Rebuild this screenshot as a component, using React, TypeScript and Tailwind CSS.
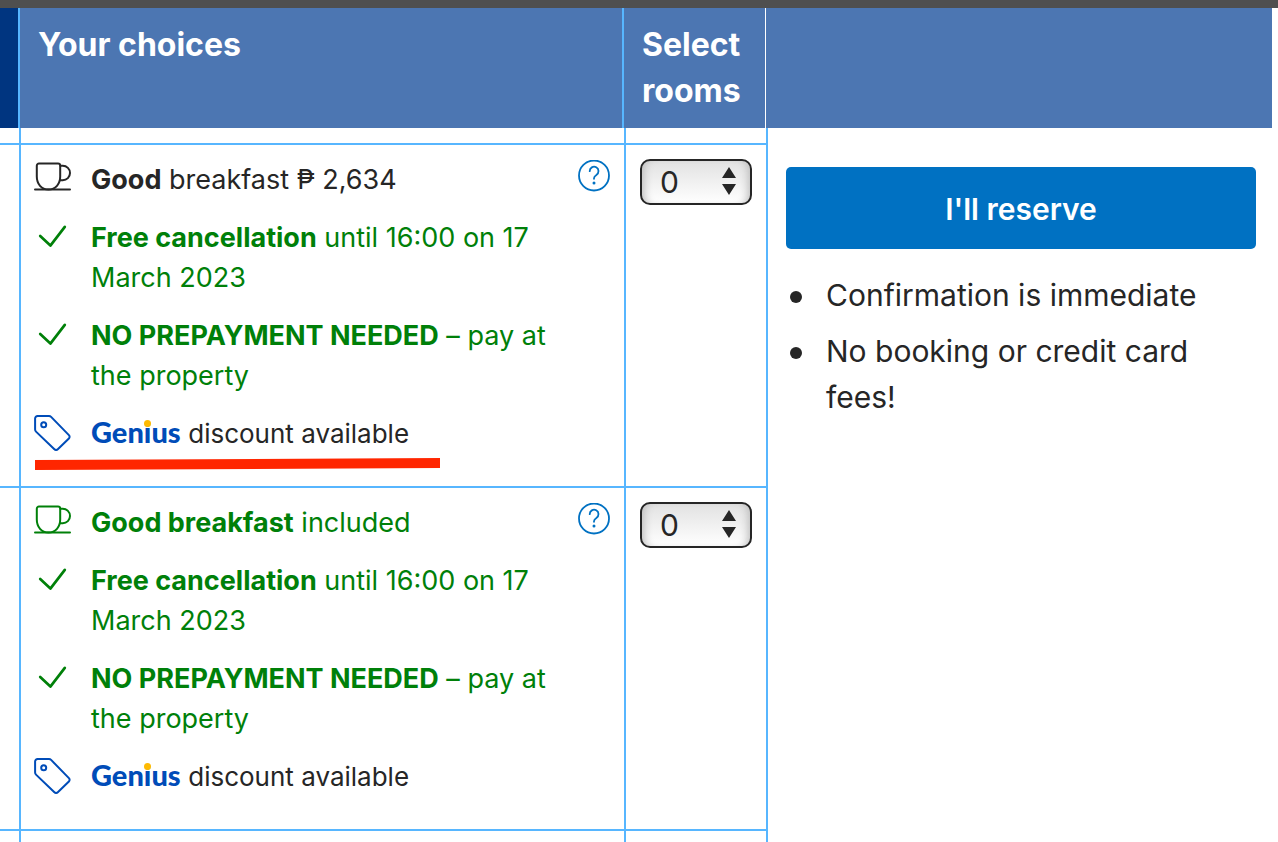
import type { ReactNode } from 'react';

interface RateOption {
  id: string;
  meal: ReactNode;
  mealIncluded: boolean;
  highlighted: boolean;
}

const rates: RateOption[] = [
  {
    id: 'room-only',
    meal: (
      <>
        <b>Good</b> breakfast ₱ 2,634
      </>
    ),
    mealIncluded: false,
    highlighted: true,
  },
  {
    id: 'breakfast',
    meal: (
      <>
        <b>Good breakfast</b> included
      </>
    ),
    mealIncluded: true,
    highlighted: false,
  },
];

const CupIcon = () => (
  <svg className="h-8 w-[37px]" viewBox="0 0 37 32" fill="none" stroke="currentColor" strokeWidth="2" strokeLinecap="round" strokeLinejoin="round" aria-hidden="true">
    <path d="M5 3.5h19a2.2 2.2 0 0 1 2.2 2.2v10.8c0 7.5-4.7 13-11.7 13S2.800 24 2.800 16.500V5.700A2.200 2.200 0 0 1 5 3.500z" />
    <path d="M26.500 5.800h2.300a7.200 7.200 0 0 1 0 14.400h-2.900" />
    <path d="M1 29.500h35" />
  </svg>
);

const CheckIcon = () => (
  <svg className="h-8 w-[37px]" viewBox="0 0 37 32" fill="none" stroke="currentColor" strokeWidth="2.700" strokeLinecap="round" strokeLinejoin="round" aria-hidden="true">
    <path d="M6.200 18l10.200 9.600L30.800 8.900" />
  </svg>
);

const TagIcon = () => (
  <svg className="h-[37px] w-[37px]" viewBox="0 -1 37 37" fill="none" stroke="currentColor" strokeWidth="2" strokeLinejoin="round" aria-hidden="true">
    <path d="M3.600 1H15a3 3 0 0 1 2.100.9l17.800 18.200a2.400 2.400 0 0 1 0 3.400L23.800 34.300a2.400 2.400 0 0 1-3.400 0L2 16.600a3 3 0 0 1-.9-2.100V3.500A2.500 2.500 0 0 1 3.600 1z" />
    <circle cx="9.700" cy="9.700" r="2.500" />
  </svg>
);

const GeniusLogo = () => (
  <span className="font-[Lato,sans-serif] text-[29px] leading-9 font-black text-[#004cb8]">
    Gen
    <span className="relative">
      i
      <span className="absolute top-[6px] left-0 size-[7px] rounded-full bg-[#feba02]" />
    </span>
    us
  </span>
);

const Perk = ({ icon, children }: { icon: ReactNode; children: ReactNode }) => (
  <li className="relative flex gap-5">
    <span className="shrink-0">{icon}</span>
    <span>{children}</span>
  </li>
);

const RoomSelect = ({ id }: { id: string }) => (
  <div className="relative">
    <select
      id={id}
      defaultValue="0"
      aria-label="Select rooms"
      className="block h-[46px] w-full appearance-none rounded-[10px] border-2 border-[#262626] bg-linear-to-b from-[#e2e2e2] to-white pl-[18px] text-[30px] leading-none text-[#262626] shadow-[inset_8px_0_8px_-6px_#bbb,inset_-8px_0_8px_-6px_#bbb]"
    >
      <option>0</option>
      <option>1</option>
      <option>2</option>
      <option>3</option>
    </select>
    <svg className="pointer-events-none absolute top-2 right-4 h-7 w-[14px]" viewBox="0 0 14 28" fill="#262626" aria-hidden="true">
      <path d="M7 0l7 11H0zM0 17h14L7 28z" />
    </svg>
  </div>
);

const RateRow = ({ rate }: { rate: RateOption }) => (
  <tr className="align-top">
    <td className="border-r-2 border-b-2 border-[#57b6ff]" />
    <td className="border-r-2 border-b-2 border-[#57b6ff] pt-[15px] pr-[14px] pb-8 pl-[13px]">
      <div className="flex items-start justify-between">
        <ul className="flex max-w-[540px] flex-col gap-[18px] text-[27px] leading-10 text-[#008009]">
          <Perk icon={<span className={rate.mealIncluded ? 'text-[#008009]' : 'text-[#262626]'}><CupIcon /></span>}>
            <span className={rate.mealIncluded ? 'text-[#008009]' : 'text-[#262626]'}>{rate.meal}</span>
          </Perk>
          <Perk icon={<CheckIcon />}>
            <b>Free cancellation</b> until 16:00 on 17 March 2023
          </Perk>
          <Perk icon={<CheckIcon />}>
            <b>NO PREPAYMENT NEEDED</b> – pay at the property
          </Perk>
          <Perk icon={<span className="text-[#004cb8]"><TagIcon /></span>}>
            <GeniusLogo /> <span className="text-[26px] text-[#262626]">discount available</span>
            {rate.highlighted && (
              <svg className="absolute top-11 left-px h-3 w-[405px]" viewBox="0 0 405 12" fill="#ff2600" aria-hidden="true">
                <path d="M0 2L405 0V10L0 12z" />
              </svg>
            )}
          </Perk>
        </ul>
        <button type="button" aria-label="More information" className="size-8 shrink-0 text-[#0071c2]">
          <svg className="size-8" viewBox="0 0 32 32" fill="none" stroke="currentColor" strokeWidth="1.800" strokeLinecap="round" aria-hidden="true">
            <circle cx="16" cy="15.500" r="15" />
            <path d="M11.700 11.200a4.400 4.400 0 1 1 6.700 3.700c-1.500.9-2.400 1.800-2.400 3.400v.5" />
            <circle cx="16" cy="22.900" r="1.500" fill="currentColor" stroke="none" />
          </svg>
        </button>
      </div>
    </td>
    <td className="border-r-2 border-b-2 border-[#57b6ff] p-[14px]">
      <RoomSelect id={`rooms-${rate.id}`} />
    </td>
  </tr>
);

export default function App() {
  return (
    <div className="min-h-screen bg-white font-[Inter,'Noto_Sans',sans-serif] text-[#262626]">
      <div className="h-2 bg-[#4f4f4f]" />

      <div className="mr-[6px] flex bg-[#4c76b2] text-[32px] leading-[46px] font-bold text-white">
        <div className="w-5 shrink-0 border-r-2 border-[#57b6ff] bg-[#003580]" />
        <div className="flex-1 border-r-2 border-[#57b6ff] py-[14px] pl-[18px]">Your choices</div>
        <div className="w-[142px] shrink-0 border-r border-white py-[14px] pl-[18px]">Select rooms</div>
        <div className="w-[506px] shrink-0" />
      </div>

      <div className="flex items-start">
        <table className="flex-1 table-fixed border-separate border-spacing-0">
          <colgroup>
            <col className="w-[21px]" />
            <col />
            <col className="w-[142px]" />
          </colgroup>
          <tbody>
            <tr className="h-[17px]">
              <td className="border-r-2 border-b-2 border-[#57b6ff]" />
              <td className="border-r-2 border-b-2 border-[#57b6ff]" />
              <td className="border-r-2 border-b-2 border-[#57b6ff]" />
            </tr>
            {rates.map((rate) => (
              <RateRow key={rate.id} rate={rate} />
            ))}
            <tr className="h-[11px]">
              <td className="border-r-2 border-[#57b6ff]" />
              <td className="border-r-2 border-[#57b6ff]" />
              <td className="border-r-2 border-[#57b6ff]" />
            </tr>
          </tbody>
        </table>

        <aside className="w-[510px] shrink-0 pt-[39px] pr-[22px] pl-[18px] text-[30px] leading-[46px]">
          <button type="button" className="h-[82px] w-full rounded-[5px] bg-[#0071c2] pt-[2px] font-semibold text-white">
            I'll reserve
          </button>
          <ul className="mt-[23px] flex flex-col gap-[10px]">
            <li className="flex gap-6">
              <span className="mt-[19px] ml-1 size-3 shrink-0 rounded-full bg-[#262626]" />
              Confirmation is immediate
            </li>
            <li className="flex gap-6">
              <span className="mt-[19px] ml-1 size-3 shrink-0 rounded-full bg-[#262626]" />
              No booking or credit card fees!
            </li>
          </ul>
        </aside>
      </div>
    </div>
  );
}
